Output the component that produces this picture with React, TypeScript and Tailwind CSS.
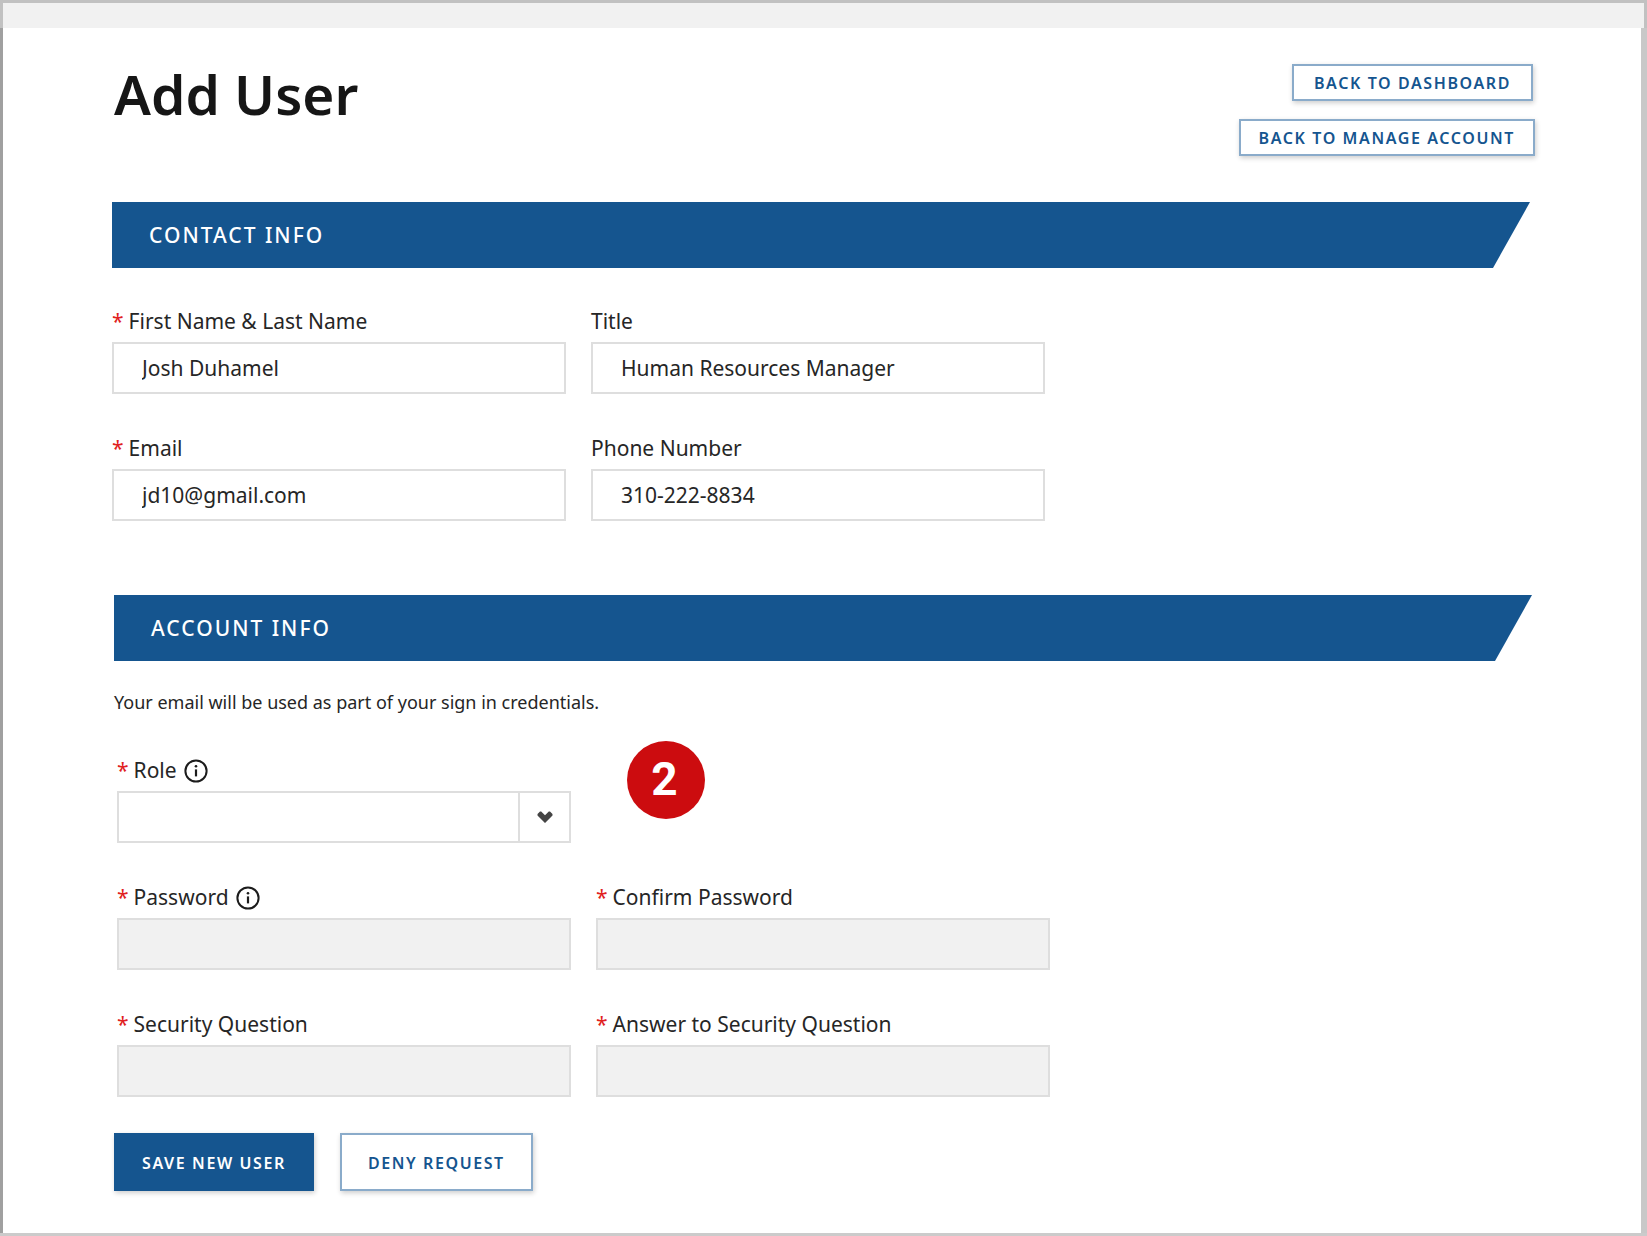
import { useState, type ReactNode } from 'react';
import clsx from 'clsx';

interface FieldProps {
  id: string;
  label: string;
  required?: boolean;
  info?: boolean;
  children: ReactNode;
}

const inputClass = 'h-[52px] w-full border-2 border-[#dedede] bg-white px-7 text-[21px] text-[#262626] outline-none';
const disabledClass = 'h-[52px] w-full border-2 border-[#dedede] bg-[#f1f1f1] px-7 text-[21px] outline-none';
const outlineBtn =
  'border-2 border-[#8aabca] bg-white text-base font-semibold tracking-widest text-[#15558f] shadow-[1px_2px_5px_rgba(0,0,0,0.2)]';

function InfoIcon() {
  return (
    <svg viewBox="0 0 24 24" className="ml-[7px] size-6" fill="none" aria-hidden="true">
      <circle cx="12" cy="12" r="10.6" stroke="#1c1c1c" strokeWidth="2" />
      <path d="M12 10.4v7" stroke="#1c1c1c" strokeWidth="2.2" />
      <circle cx="12" cy="7.3" r="1.3" fill="#1c1c1c" />
    </svg>
  );
}

function Banner({ children }: { children: ReactNode }) {
  return (
    <h2 className="flex h-[66px] items-center bg-[#15558f] pt-0.5 pl-[37px] text-[21px] font-medium tracking-[2px] text-white [clip-path:polygon(0_0,100%_0,calc(100%-37px)_100%,0_100%)]">
      {children}
    </h2>
  );
}

function Field({ id, label, required, info, children }: FieldProps) {
  return (
    <div>
      <label htmlFor={id} className="mb-1.5 flex h-[29px] items-center pt-px text-[21px] text-[#262626]">
        {required && <span className="mr-[5px] text-[#e02020]">*</span>}
        {label}
        {info && <InfoIcon />}
      </label>
      {children}
    </div>
  );
}

export default function App() {
  const [contact, setContact] = useState({
    name:  'Josh Duhamel',
    title: 'Human Resources Manager',
    email: 'jd10@gmail.com',
    phone: '310-222-8834',
  });

  const bind = (key: keyof typeof contact) => ({
    id: key,
    value: contact[key],
    onChange: (e: React.ChangeEvent<HTMLInputElement>) => setContact({ ...contact, [key]: e.target.value }),
    className: inputClass,
  });

  return (
    <div className="flex min-h-screen flex-col border-y-[3px] border-t-[#c1c1c1] border-b-[#cbcbcb] bg-white font-['Noto_Sans',sans-serif]">
      <div className="h-[25px] border-x-[3px] border-[#c1c1c1] bg-[#f1f1f1]" />

      <main className="flex-1 border-r-[6px] border-l-[3px] border-r-[#c8c8c8] border-l-[#a0a0a0] pr-[106px] pb-10 pl-[109px]">
        <header className="flex justify-between pt-9">
          <h1 className="ml-0.5 text-[55px] leading-[60px] font-semibold text-[#161616]">Add User</h1>
          <div className="flex flex-col items-end gap-[18px]">
            <button type="button" className={clsx(outlineBtn, 'mr-0.5 h-[37px] px-5')}>
              BACK TO DASHBOARD
            </button>
            <button type="button" className={clsx(outlineBtn, 'h-[37px] px-[18px]')}>
              BACK TO MANAGE ACCOUNT
            </button>
          </div>
        </header>

        <form onSubmit={e => e.preventDefault()}>
          <section className="mt-[46px] mr-[5px]">
            <Banner>CONTACT INFO</Banner>
            <div className="mt-[39px] grid max-w-[933px] grid-cols-2 gap-x-[25px] gap-y-10">
              <Field id="name" label="First Name & Last Name" required>
                <input type="text" {...bind('name')} />
              </Field>
              <Field id="title" label="Title">
                <input type="text" {...bind('title')} />
              </Field>
              <Field id="email" label="Email" required>
                <input type="email" {...bind('email')} />
              </Field>
              <Field id="phone" label="Phone Number">
                <input type="tel" {...bind('phone')} />
              </Field>
            </div>
          </section>

          <section className="mt-[74px] mr-[3px] ml-0.5">
            <Banner>ACCOUNT INFO</Banner>
            <p className="mt-[27px] text-lg text-[#262626]">Your email will be used as part of your sign in credentials.</p>

            <div className="mt-10 ml-[3px] grid max-w-[933px] grid-cols-2 gap-x-[25px] gap-y-10">
              <Field id="role" label="Role" required info>
                <div className="relative">
                  <select id="role" className={clsx(inputClass, 'appearance-none')} defaultValue="">
                    <option value="" />
                    <option value="admin">Admin</option>
                    <option value="user">User</option>
                  </select>
                  <span className="pointer-events-none absolute inset-y-0 right-0 flex w-[53px] items-center justify-center border-2 border-[#dedede]">
                    <svg viewBox="0 0 16 12" className="h-3 w-4" aria-hidden="true">
                      <path d="M0.5 3L3 0.5H4.2L8 4.2L11.8 0.5H13L15.5 3V4.4L8 12L0.5 4.4Z" fill="#444" />
                    </svg>
                  </span>
                </div>
              </Field>
              <div className="relative">
                <span className="absolute -top-[15px] left-[31px] flex size-[78px] items-center justify-center rounded-full bg-[#cc0c0f] pr-[3px] pb-[3px] font-['Roboto',sans-serif] text-[46px] leading-none font-bold text-white">
                  2
                </span>
              </div>
              <Field id="password" label="Password" required info>
                <input id="password" type="password" disabled className={disabledClass} />
              </Field>
              <Field id="confirm" label="Confirm Password" required>
                <input id="confirm" type="password" disabled className={disabledClass} />
              </Field>
              <Field id="question" label="Security Question" required>
                <input id="question" type="text" disabled className={disabledClass} />
              </Field>
              <Field id="answer" label="Answer to Security Question" required>
                <input id="answer" type="text" disabled className={disabledClass} />
              </Field>
            </div>

            <div className="mt-9 flex gap-[26px]">
              <button
                type="submit"
                className="h-[58px] bg-[#15558f] px-7 pt-0.5 text-base font-semibold tracking-widest text-white shadow-[1px_2px_5px_rgba(0,0,0,0.2)]"
              >
                SAVE NEW USER
              </button>
              <button type="button" className={clsx(outlineBtn, 'h-[58px] px-[26px] pt-0.5')}>
                DENY REQUEST
              </button>
            </div>
          </section>
        </form>
      </main>
    </div>
  );
}
